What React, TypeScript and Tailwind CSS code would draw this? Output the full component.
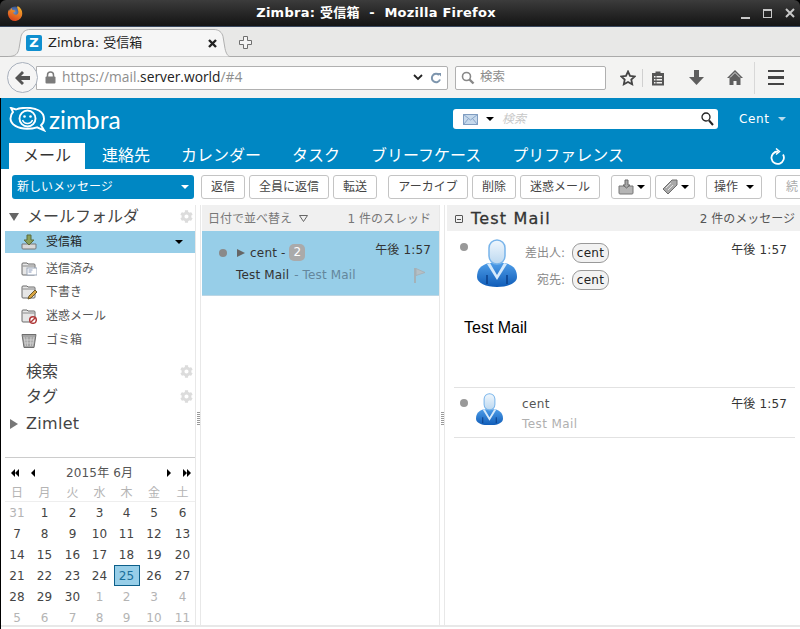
import { FaCog } from 'react-icons/fa';

const ui = "font-['DejaVu_Sans','Noto_Sans_CJK_JP',sans-serif]";

function FirefoxLogo() {
  return (
    <svg width="16" height="16" viewBox="0 0 16 16">
      <defs>
        <radialGradient id="ffGlobe" cx="0.45" cy="0.45" r="0.6">
          <stop offset="0" stopColor="#6d8fc4" />
          <stop offset="1" stopColor="#27407c" />
        </radialGradient>
        <linearGradient id="ffFox" x1="0.7" y1="0" x2="0.3" y2="1">
          <stop offset="0" stopColor="#f7b32b" />
          <stop offset="1" stopColor="#d8401d" />
        </linearGradient>
      </defs>
      <circle cx="8" cy="8" r="6.6" fill="url(#ffGlobe)" />
      <path d="M11 1.2c2.6 1.4 4.2 4 4.2 6.9A7.1 7.1 0 0 1 1 9.6C.6 7.6 1.2 5.6 2.2 4.2c0 .9.3 1.5.7 1.8.2-1.3 1.1-2.4 2.3-3-.4 1-.2 1.6.5 2.1 1.6.1 2.6.6 2.4 1.3-.2.4-1.4.6-1.9 1.2.2 1.4 1.4 2.4 2.8 2.2 1.7-.2 2.6-1.7 2.3-3.4-.2-1.8-1-3.2-1.3-4.7z" fill="url(#ffFox)" />
    </svg>
  );
}

function WindowControls() {
  return (
    <div className="flex items-center gap-[13px] pr-[5px]">
      <div className="w-[9px] h-[2px] bg-[#c8c8c8] mt-[9px]" />
      <div className="w-[9px] h-[9px] border border-[#c8c8c8] border-t-2" />
      <svg width="10" height="10" viewBox="0 0 10 10" stroke="#c8c8c8" strokeWidth="2">
        <path d="M1 1l8 8M9 1l-8 8" />
      </svg>
    </div>
  );
}

function TabShape() {
  return (
    <svg className="absolute left-0 top-0" width="222" height="30" viewBox="0 0 222 30">
      <path d="M0 28.5c8 0 10-3 11-8l2-12c1-4 4-7 9-7h184c5 0 8 3 9 7l2 12c1 5 3 8 5 8" fill="#f6f6f6" stroke="#b0b0b0" />
    </svg>
  );
}

function BrowserChrome() {
  return (
    <div className="flex flex-col font-['DejaVu_Sans','Noto_Sans_CJK_JP',sans-serif]">
      <div className="h-[26px] rounded-t-[6px] bg-gradient-to-b from-[#3c3c3c] to-[#141414] flex items-center justify-between pl-[7px] text-white">
        <FirefoxLogo />
        <div className="text-[13px] font-bold tracking-[0.25px] whitespace-pre pr-[12px]">Zimbra: 受信箱  -  Mozilla Firefox</div>
        <WindowControls />
      </div>
      <div className="h-[31px] bg-[#e8e8e7] border-b border-[#aaaaaa] pl-[8px] pt-[1px] flex border-t border-t-[#39485f] relative">
        <div className="relative w-[222px] h-[30px] flex items-center pl-[18px] shrink-0">
          <TabShape />
          <div className="relative w-[16px] h-[16px] bg-[#0f8fcf] rounded-[2px] text-white text-[13px] font-bold leading-[16px] text-center">Z</div>
          <div className="relative ml-[6px] text-[13px] text-[#222]">Zimbra: 受信箱</div>
          <svg className="absolute left-[200px] top-[11px]" width="9" height="9" viewBox="0 0 9 9" stroke="#222" strokeWidth="2.4">
            <path d="M1 1l7 7M8 1l-7 7" />
          </svg>
        </div>
        <svg className="mt-[8px] ml-[9px]" width="13" height="13" viewBox="0 0 13 13" fill="#f4f4f4" stroke="#6f6f6f">
          <path d="M4.5.5h4v4h4v4h-4v4h-4v-4h-4v-4h4z" />
        </svg>
      </div>
      <div className="h-[41px] bg-[#f3f3f2] flex items-center pl-[7px] relative">
        <div className="relative z-10 w-[31px] h-[31px] rounded-full bg-[#f5f5f5] border border-[#a8b0bc] flex items-center justify-center shrink-0">
          <svg width="15" height="14" viewBox="0 0 15 14" fill="#555">
            <path d="M7 0l2 2-3 3h9v4H6l3 3-2 2-7-7z" />
          </svg>
        </div>
        <div className="-ml-[2px] w-[412px] h-[24px] bg-white border border-[#b0b0b0] rounded-r-[2px] flex items-center pl-[8px] pr-[5px]">
          <svg width="11" height="13" viewBox="0 0 11 13" className="mr-[6px]">
            <path d="M2.5 6V4a3 3 0 0 1 6 0v2" fill="none" stroke="#7c7c7c" strokeWidth="1.5" />
            <rect x="0.5" y="5.5" width="10" height="7" rx="1" fill="#7c7c7c" />
          </svg>
          <span className="font-['Open_Sans'] text-[13.8px] text-[#8e8e8e]">https://mail.</span>
          <span className="font-['Open_Sans'] text-[13.8px] text-[#222]">server.world</span>
          <span className="font-['Open_Sans'] text-[13.8px] text-[#8e8e8e]">/#4</span>
          <svg className="ml-auto" width="10" height="7" viewBox="0 0 10 7" fill="none" stroke="#222" strokeWidth="1.8">
            <path d="M1 1l4 4 4-4" />
          </svg>
          <svg className="ml-[7px]" width="12" height="12" viewBox="0 0 12 12" fill="none" stroke="#7d95ad" strokeWidth="2">
            <path d="M10 7.5A4.2 4.2 0 1 1 9 3" />
            <path d="M7.5 1H11v3.5z" fill="#7d95ad" stroke="none" />
          </svg>
        </div>
        <div className="ml-[7px] w-[151px] h-[24px] bg-white border border-[#b0b0b0] rounded-[2px] flex items-center pl-[5px] text-[12.5px] text-[#8c8c8c]">
          <svg width="14" height="14" viewBox="0 0 14 14" fill="none" stroke="#888" strokeWidth="1.6" className="mr-[5px]">
            <circle cx="5.5" cy="5.5" r="4" />
            <path d="M8.5 8.5l4 4" strokeWidth="2.4" />
          </svg>
          検索
        </div>
        <svg className="ml-[14px]" width="16" height="16" viewBox="0 0 16 16" fill="none" stroke="#444" strokeWidth="1.8">
          <path d="M8 1.5l2 4.3 4.7.6-3.4 3.2.9 4.7L8 12l-4.2 2.3.9-4.7L1.3 6.4 6 5.8z" />
        </svg>
        <div className="ml-[6px] w-[1px] h-[18px] bg-[#d0d0d0]" />
        <svg className="ml-[8px]" width="14" height="16" viewBox="0 0 14 16">
          <path d="M1 3h3.5V1.5h5V3H13v12.5H1z" fill="#555" />
          <path d="M3 6h1.5v1.5H3zM5.5 6H11v1.5H5.5zM3 9h1.5v1.5H3zM5.5 9H11v1.5H5.5zM3 12h1.5v1.5H3zM5.5 12H11v1.5H5.5z" fill="#f3f3f2" />
        </svg>
        <svg className="ml-[24px]" width="15" height="15" viewBox="0 0 15 15" fill="#5e5e5e">
          <path d="M5 0h5v7h5l-7.5 8L0 7h5z" />
        </svg>
        <svg className="ml-[23px]" width="16" height="15" viewBox="0 0 16 15">
          <path d="M8 0L0 8h2.500v7H6.500v-4h3v4h4V8H16z" fill="#5e5e5e" />
          <path d="M8 2.500L3 7.500M8 2.500l5 5" stroke="#fff" strokeWidth="0.8" />
        </svg>
        <div className="ml-[11px] w-[1px] h-[32px] bg-[#d8d8d8]" />
        <div className="ml-[13px] flex flex-col gap-[4px]">
          <div className="w-[16px] h-[2.500px] bg-[#444]" />
          <div className="w-[16px] h-[2.500px] bg-[#444]" />
          <div className="w-[16px] h-[2.500px] bg-[#444]" />
        </div>
      </div>
    </div>
  );
}

function ZimbraLogo() {
  return (
    <svg width="37" height="25" viewBox="0 0 37 25" fill="none" stroke="#fff">
      <path d="M2 1l5 1.500C10 1 14 .8 18 .8c9 0 17 3.500 17 11 0 3-1 5-3 6.500l3 5-7-3c-3 1-7 1.500-10 1.500C9 21.800 1.500 17.500 1.500 11.500c0-3 1-5 2.500-6.500z" strokeWidth="1.9" />
      <circle cx="18.500" cy="11.500" r="8" strokeWidth="1.9" />
      <circle cx="15.500" cy="9.500" r="1.300" fill="#fff" stroke="none" />
      <circle cx="21.500" cy="9.500" r="1.300" fill="#fff" stroke="none" />
      <path d="M13.500 13c1 2.500 3 3.500 5 3.500s4-1 5-3.500" strokeWidth="1.500" />
    </svg>
  );
}

function Header() {
  const tabs = ['連絡先', 'カレンダー', 'タスク', 'ブリーフケース', 'プリファレンス'];
  return (
    <div className="h-[71px] bg-[#0087c3] flex flex-col">
      <div className="h-[45px] flex pl-[8px] pt-[9px]">
        <ZimbraLogo />
        <span className="w-[73px] font-['Lato'] text-[24.5px] leading-[25px] text-white ml-[3px]">zimbra</span>
        <div className="ml-[331px] mt-[2px] w-[265px] h-[20px] bg-white rounded-[3px] flex items-center pl-[10px] pr-[4px]">
          <svg width="15" height="11" viewBox="0 0 15 11">
            <rect x="0.5" y="0.500" width="14" height="10" fill="#c6d9ec" stroke="#7f9cc0" />
            <path d="M.5.500l7 5.500 7-5.500M.5 10.500l5-6M14.500 10.500l-5-6" fill="none" stroke="#8aa6c8" />
          </svg>
          <div className="ml-[8px] w-0 h-0 border-x-[4px] border-x-transparent border-t-[4px] border-t-black" />
          <span className="ml-[8px] text-[12px] text-[#c8c8c8] italic">検索</span>
          <svg className="ml-auto" width="13" height="14" viewBox="0 0 13 14" fill="none" stroke="#222" strokeWidth="1.3">
            <circle cx="5" cy="5" r="4" />
            <path d="M8 8.500l4 4.500" strokeWidth="2" />
          </svg>
        </div>
        <span className="ml-[21px] mt-[3px] text-[12px] text-white tracking-[0.6px]">Cent</span>
        <div className="ml-[9px] mt-[10px] w-0 h-0 border-x-[4px] border-x-transparent border-t-[4px] border-t-[#b8dcee]" />
      </div>
      <div className="h-[26px] flex items-center pl-[8px] text-[16px] text-white">
        <div className="h-[26px] w-[76px] bg-white text-[#333] flex items-center justify-center">メール</div>
        <div className="flex pl-[17px] gap-[31px]">
          {tabs.map((t) => (
            <span key={t}>{t}</span>
          ))}
        </div>
        <svg className="ml-auto mr-[14px]" width="16" height="17" viewBox="0 0 16 17" fill="none" stroke="#fff" strokeWidth="1.800">
          <path d="M13 6.500A6.200 6.200 0 1 1 8 3.500" />
          <path d="M6 .500L9.500 3.500 6 6.500" strokeWidth="1.500" />
        </svg>
      </div>
    </div>
  );
}

function Btn({ label, w }: { label: string; w: number }) {
  return (
    <div
      className="h-[24px] shrink-0 bg-white border border-[#c4c4c4] rounded-[3px] flex items-center justify-center text-[12px] text-[#444]"
      style={{ width: w }}
    >
      {label}
    </div>
  );
}

function Caret() {
  return <div className="w-0 h-0 border-x-[4px] border-x-transparent border-t-[4px] border-t-black" />;
}

function Toolbar() {
  return (
    <div className="h-[36px] bg-white flex items-center pl-[11px] overflow-hidden">
      <div className="w-[182px] h-[24px] rounded-[3px] bg-[#0087c3] flex items-center justify-between pl-[5px] pr-[5px] text-[12px] text-white shrink-0">
        新しいメッセージ
        <div className="w-0 h-0 border-x-[4px] border-x-transparent border-t-[4px] border-t-white" />
      </div>
      <div className="flex gap-[4px] ml-[7px]">
        <Btn label="返信" w={44} />
        <Btn label="全員に返信" w={80} />
        <Btn label="転送" w={44} />
      </div>
      <div className="flex gap-[4px] ml-[11px]">
        <Btn label="アーカイブ" w={80} />
        <Btn label="削除" w={44} />
        <Btn label="迷惑メール" w={80} />
      </div>
      <div className="ml-[11px] w-[40px] h-[24px] shrink-0 border border-[#c4c4c4] rounded-[3px] flex items-center justify-center gap-[3px]">
        <svg width="16" height="16" viewBox="0 0 16 16">
          <path d="M1 7h14v7a1 1 0 0 1-1 1H2a1 1 0 0 1-1-1z" fill="#b5b5b5" stroke="#777" />
          <path d="M7 1h3v5h2l-3.500 3L5 6h2z" fill="#a9a9a9" stroke="#666" />
        </svg>
        <Caret />
      </div>
      <div className="ml-[4px] w-[40px] h-[24px] shrink-0 border border-[#c4c4c4] rounded-[3px] flex items-center justify-center gap-[3px]">
        <svg width="16" height="16" viewBox="0 0 16 16">
          <path d="M10 1h5v5l-9 9-5-5z" fill="#a8a8a8" stroke="#6d6d6d" />
          <path d="M4 9l5-5M6 11l5-5" stroke="#e2e2e2" />
        </svg>
        <Caret />
      </div>
      <div className="ml-[11px] w-[56px] h-[24px] shrink-0 border border-[#c4c4c4] rounded-[3px] flex items-center justify-center gap-[8px] text-[12px] text-[#444]">
        操作
        <Caret />
      </div>
      <div className="ml-[13px] w-[44px] h-[24px] shrink-0 border border-[#c4c4c4] rounded-[3px] flex items-center pl-[10px] text-[12px] text-[#aaaaaa]">
        続
      </div>
    </div>
  );
}

function Gear() {
  return <FaCog size={13} color="#dcdcdc" className="shrink-0" />;
}

const folderIconBase = (
  <>
    <path d="M1 3a1 1 0 0 1 1-1h4l1 1h6a1 1 0 0 1 1 1v9a1 1 0 0 1-1 1H2a1 1 0 0 1-1-1z" fill="#e6e6e6" stroke="#6b6b6b" />
    <path d="M1.500 5h12" stroke="#8a8a8a" />
  </>
);

function FolderIcon({ kind }: { kind: 'inbox' | 'sent' | 'drafts' | 'junk' | 'trash' }) {
  if (kind === 'inbox') {
    return (
      <svg width="16" height="16" viewBox="0 0 16 16">
        <path d="M1 10h14v4a1 1 0 0 1-1 1H2a1 1 0 0 1-1-1z" fill="#d8d8d8" stroke="#777" />
        <path d="M6 1h4v5h3l-5 5-5-5h3z" fill="#8aa05a" stroke="#5a6a3a" />
      </svg>
    );
  }
  if (kind === 'trash') {
    return (
      <svg width="16" height="16" viewBox="0 0 16 16">
        <path d="M1 2.500h14l-2 13H3z" fill="#a5a5a5" stroke="#6e6e6e" />
        <path d="M3 5l1.500 9M6 5l.5 9M10 5l-.5 9M13 5l-1.500 9M3 8h10M3.500 11h9" stroke="#d6d6d6" strokeWidth="0.800" />
      </svg>
    );
  }
  return (
    <svg width="16" height="16" viewBox="0 0 16 16">
      {folderIconBase}
      {kind === 'sent' && (
        <>
          <rect x="6" y="7" width="10" height="7" fill="#fff" stroke="#9aa6b8" />
          <path d="M7.500 9h4M7.500 11h3" stroke="#8899bb" />
        </>
      )}
      {kind === 'drafts' && (
        <path d="M7 15l1-3 6-6 2 2-6 6z" fill="#d9a441" stroke="#6b5a2a" />
      )}
      {kind === 'junk' && (
        <>
          <circle cx="12" cy="12" r="3.300" fill="#fff" stroke="#b03a3a" strokeWidth="1.500" />
          <path d="M10 14l4-4" stroke="#b03a3a" strokeWidth="1.400" />
        </>
      )}
    </svg>
  );
}

function FolderRow({ kind, label, h }: { kind: 'sent' | 'drafts' | 'junk' | 'trash'; label: string; h: number }) {
  return (
    <div className="flex items-center pl-[16px] text-[12px] text-[#555]" style={{ height: h }}>
      <FolderIcon kind={kind} />
      <span className="ml-[9px]">{label}</span>
    </div>
  );
}

const weeks = [
  ['31', '1', '2', '3', '4', '5', '6'],
  ['7', '8', '9', '10', '11', '12', '13'],
  ['14', '15', '16', '17', '18', '19', '20'],
  ['21', '22', '23', '24', '25', '26', '27'],
  ['28', '29', '30', '1', '2', '3', '4'],
  ['5', '6', '7', '8', '9', '10', '11'],
];

function ArrowL() {
  return <div className="w-0 h-0 border-y-[4px] border-y-transparent border-r-[4px] border-r-black" />;
}

function ArrowR() {
  return <div className="w-0 h-0 border-y-[4px] border-y-transparent border-l-[4px] border-l-black" />;
}

function Calendar() {
  return (
    <div className="border-t border-[#cccccc] text-[12px]">
      <div className="h-[29px] flex items-center pl-[6px] pr-[4px] text-[#555] pt-[1px]">
        <ArrowL />
        <ArrowL />
        <div className="ml-[12px]">
          <ArrowL />
        </div>
        <span className="ml-[31px] tracking-[0.15px]">2015年 6月</span>
        <div className="ml-auto flex items-center">
          <ArrowR />
          <div className="ml-[12px] flex">
            <ArrowR />
            <ArrowR />
          </div>
        </div>
      </div>
      <div className="-ml-[1px] grid grid-cols-[26px_29px_27px_27px_27px_28px_29px] h-[15px] text-[#b4b4b4] border-b border-[#eeeeee] text-center leading-[12px]">
        {['日', '月', '火', '水', '木', '金', '土'].map((d) => (
          <span key={d}>{d}</span>
        ))}
      </div>
      <div className="-ml-[1px] grid grid-cols-[26px_29px_27px_27px_27px_28px_29px] text-center text-[#444]">
        {weeks.map((week, i) =>
          week.map((d, j) => {
            const outside = (i === 0 && j === 0) || (i === 4 && j > 2) || i === 5;
            const today = i === 3 && j === 4;
            return (
              <div key={`${i}-${j}`} className="h-[21px] flex items-center justify-center">
                <span
                  className={
                    today
                      ? 'w-[26px] h-[21px] bg-[#97cee8] border border-[#0c5f8a] text-[#1a6e9a] flex items-center justify-center'
                      : outside
                        ? 'text-[#b4b4b4]'
                        : ''
                  }
                >
                  {d}
                </span>
              </div>
            );
          }),
        )}
      </div>
    </div>
  );
}

function LeftPanel() {
  return (
    <div className="w-[190px] shrink-0 h-full overflow-hidden">
      <div className="h-[26px] flex items-center pr-[2px] pb-[3px] text-[16px] text-[#444]">
        <div className="ml-[4px] w-0 h-0 border-x-[5px] border-x-transparent border-t-[8px] border-t-[#666]" />
        <span className="ml-[8px]">メールフォルダ</span>
        <div className="ml-auto">
          <Gear />
        </div>
      </div>
      <div className="h-[22px] bg-[#97cee8] flex items-center pl-[16px] pr-[12px] text-[12px] text-[#222]">
        <FolderIcon kind="inbox" />
        <span className="ml-[9px]">受信箱</span>
        <div className="ml-auto">
          <Caret />
        </div>
      </div>
      <div className="pt-[4px]">
        <FolderRow kind="sent" label="送信済み" h={23} />
        <FolderRow kind="drafts" label="下書き" h={23} />
        <FolderRow kind="junk" label="迷惑メール" h={25} />
        <FolderRow kind="trash" label="ゴミ箱" h={23} />
      </div>
      <div className="mt-[8px] text-[16px] text-[#444]">
        <div className="h-[25px] flex items-center pl-[21px] pr-[2px]">
          検索
          <div className="ml-auto">
            <Gear />
          </div>
        </div>
        <div className="h-[25px] flex items-center pl-[21px] pr-[2px]">
          タグ
          <div className="ml-auto">
            <Gear />
          </div>
        </div>
        <div className="h-[28px] flex items-center pl-[5px] pt-[1px]">
          <div className="w-0 h-0 border-y-[5px] border-y-transparent border-l-[8px] border-l-[#777]" />
          <span className="ml-[8px] tracking-[0.3px]">Zimlet</span>
        </div>
      </div>
      <div className="mt-[20px]">
        <Calendar />
      </div>
    </div>
  );
}

function Sash() {
  return (
    <div className="w-[6px] shrink-0 h-full border-x border-[#e8e8e8] flex items-center justify-center">
      <div className="flex flex-col gap-[1px] mt-[6px]">
        {[0, 1, 2, 3, 4, 5, 6].map((i) => (
          <div key={i} className="w-[3px] h-[1px] bg-[#999]" />
        ))}
      </div>
    </div>
  );
}

function MessageList() {
  return (
    <div className="w-[237px] shrink-0 h-full text-[12px]">
      <div className="h-[26px] bg-[#f0f0f0] flex items-center justify-between pl-[6px] pr-[8px] pt-[1px] text-[#777]">
        <div className="flex items-center">
          日付で並べ替え
          <svg className="ml-[7px]" width="9" height="7" viewBox="0 0 9 7" fill="none" stroke="#666">
            <path d="M.5.500h8l-4 6z" />
          </svg>
        </div>
        <span>1 件のスレッド</span>
      </div>
      <div className="h-[65px] bg-[#97cee8] border-b border-[#bcd6e4] text-[#333]">
        <div className="h-[33px] flex items-center pl-[17px] pr-[8px] pt-[10px]">
          <div className="w-[8px] h-[8px] rounded-full bg-[#8a8a8a]" />
          <div className="ml-[10px] w-0 h-0 border-y-[4.500px] border-y-transparent border-l-[8px] border-l-[#666]" />
          <span className="ml-[5px] tracking-[0.2px]">cent</span>
          <span className="ml-[4px]">-</span>
          <div className="ml-[4px] w-[16px] h-[17px] rounded-[5px] bg-[#aaaaaa] text-white text-center leading-[17px]">2</div>
          <span className="ml-auto -mt-[6px] tracking-[0.15px]">午後 1:57</span>
        </div>
        <div className="h-[22px] flex items-center pl-[34px] pr-[13px]">
          <span className="tracking-[0.15px]">Test Mail</span>
          <span className="ml-[5px] text-[#64879c] tracking-[0.15px]">- Test Mail</span>
          <svg className="ml-auto" width="12" height="16" viewBox="0 0 12 16">
            <path d="M1 1v15" stroke="#a8a8a8" strokeWidth="1.500" />
            <path d="M2 1.500l9 4-9 3z" fill="#b5c0c6" stroke="#a6adb2" strokeWidth="0.800" />
          </svg>
        </div>
      </div>
    </div>
  );
}

function Avatar({ size }: { size: number }) {
  return (
    <svg width={size} height={size * 1.2} viewBox="0 0 40 48">
      <defs>
        <linearGradient id={`face${size}`} x1="0" y1="0" x2="0" y2="1">
          <stop offset="0" stopColor="#f0f7fd" />
          <stop offset="1" stopColor="#bcd8f0" />
        </linearGradient>
        <linearGradient id={`body${size}`} x1="0" y1="0" x2="0" y2="1">
          <stop offset="0" stopColor="#4e9de8" />
          <stop offset="1" stopColor="#0f5cb8" />
        </linearGradient>
      </defs>
      <path d="M0 38c0-8 4-12 12-14h16c8 2 12 6 12 14 0 6-9 10-20 10S0 44 0 38z" fill={`url(#body${size})`} />
      <path d="M10 36v9M30 36v9" stroke="#0a3f8a" strokeWidth="1.500" />
      <path d="M13 24l7 12 7-12 3 1-10 16-10-16z" fill="#d6eafb" />
      <rect x="12" y="1" width="16" height="24" rx="8" fill={`url(#face${size})`} stroke="#78b4ea" strokeWidth="1.500" />
    </svg>
  );
}

function Pill({ label }: { label: string }) {
  return (
    <div className="w-[37px] h-[20px] rounded-[9px] border border-[#999] bg-[#f2f2f2] text-[#222] text-center leading-[18px] tracking-[0.3px]">
      {label}
    </div>
  );
}

function ReadingPane() {
  return (
    <div className="flex-1 min-w-0 h-full text-[12px]">
      <div className="h-[26px] bg-[#f0f0f0] flex items-center pl-[8px] pt-[2px] whitespace-nowrap overflow-hidden text-[#555]">
        <div className="w-[8px] h-[8px] border border-[#555] rounded-[1px] flex items-center justify-center">
          <div className="w-[4px] h-[1px] bg-[#555]" />
        </div>
        <span className="ml-[8px] text-[16px] text-[#333] tracking-[1.2px] [-webkit-text-stroke:0.3px_#333]">Test Mail</span>
        <span className="ml-auto pr-[5px]">2 件のメッセージ</span>
      </div>
      <div className="h-[156px]">
        <div className="flex pl-[13px] pt-[8px]">
          <div className="w-[8px] h-[8px] rounded-full bg-[#999] mt-[4px]" />
          <div className="ml-[9px]">
            <Avatar size={40} />
          </div>
          <div className="ml-[8px] mt-[4px] flex flex-col gap-[7px] text-[#888]">
            <div className="flex items-center gap-[7px]">
              <span className="w-[40px] text-right whitespace-nowrap">差出人:</span>
              <Pill label="cent" />
            </div>
            <div className="flex items-center gap-[7px]">
              <span className="w-[40px] text-right whitespace-nowrap">宛先:</span>
              <Pill label="cent" />
            </div>
          </div>
          <span className="ml-auto mr-[13px] mt-[2px] text-[#333] tracking-[0.15px]">午後 1:57</span>
        </div>
        <div className="pl-[17px] pt-[26px] font-['Liberation_Sans',sans-serif] text-[16px] text-black">Test Mail</div>
      </div>
      <div className="ml-[7px] mr-[5px] h-[51px] border-y border-[#e2e2e2] flex pl-[6px] pt-[5px]">
        <div className="w-[8px] h-[8px] rounded-full bg-[#999] mt-[6px]" />
        <div className="ml-[8px]">
          <Avatar size={27} />
        </div>
        <div className="ml-[19px] flex flex-col pt-[2px] gap-[2px] tracking-[0.4px]">
          <span className="text-[#555]">cent</span>
          <span className="text-[#b0b0b0]">Test Mail</span>
        </div>
        <span className="ml-auto mr-[8px] mt-[2px] text-[#333] tracking-[0.15px]">午後 1:57</span>
      </div>
    </div>
  );
}

export default function App() {
  return (
    <div className={`w-[800px] h-[629px] overflow-hidden bg-black ${ui}`}>
      <BrowserChrome />
      <div className="ml-[1px] h-[531px] bg-white flex flex-col">
        <Header />
        <Toolbar />
        <div className="flex-1 min-h-0 flex pl-[4px] mb-[2px] border-b-2 border-[#e8e8e8]">
          <LeftPanel />
          <Sash />
          <div className="w-[1px]" />
          <MessageList />
          <Sash />
          <div className="w-[2px]" />
          <ReadingPane />
        </div>
      </div>
    </div>
  );
}
